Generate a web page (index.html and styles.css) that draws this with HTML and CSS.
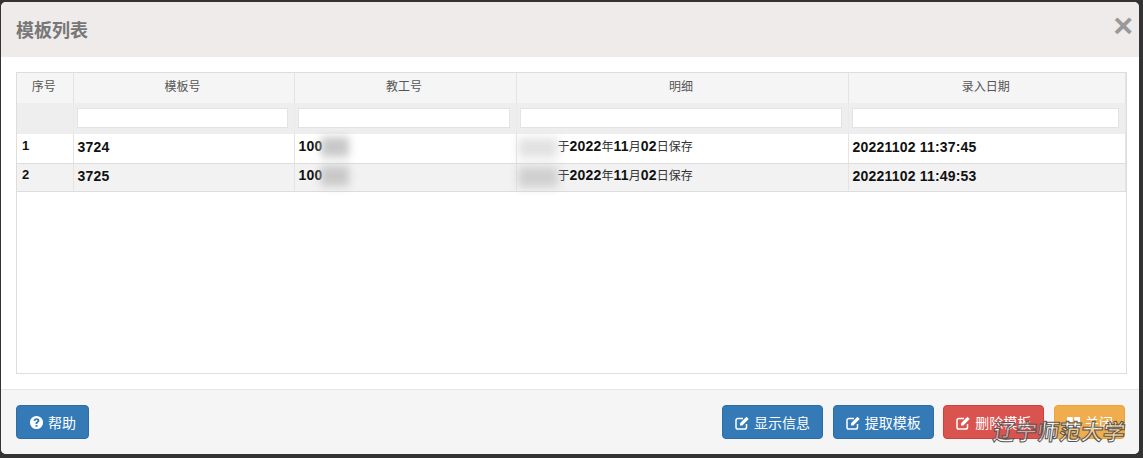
FILE: index.html
```html
<!DOCTYPE html>
<html lang="zh-CN">
<head>
<meta charset="utf-8">
<title>模板列表</title>
<link rel="stylesheet" href="styles.css">
</head>
<body>
<div class="modal">
  <header class="modal-header">
    <h4 class="modal-title">模板列表</h4>
    <span class="close">×</span>
  </header>
  <main class="modal-body">
    <div class="grid-box">
      <table class="grid">
        <colgroup>
          <col class="col-no"><col class="col-tpl"><col class="col-staff"><col class="col-detail"><col class="col-date">
        </colgroup>
        <thead>
          <tr class="head-row"><th>序号</th><th>模板号</th><th>教工号</th><th>明细</th><th>录入日期</th></tr>
          <tr class="filter-row">
            <td></td>
            <td><input class="filter" type="text"></td>
            <td><input class="filter" type="text"></td>
            <td><input class="filter" type="text"></td>
            <td><input class="filter" type="text"></td>
          </tr>
        </thead>
        <tbody>
          <tr class="row">
            <td class="num">1</td><td>3724</td>
            <td>100<span class="redact redact-id"></span></td>
            <td class="detail"><span class="redact redact-name"></span>于<b>2022</b>年<b>11</b>月<b>02</b>日保存</td>
            <td>20221102 11:37:45</td>
          </tr>
          <tr class="row alt">
            <td class="num">2</td><td>3725</td>
            <td>100<span class="redact redact-id"></span></td>
            <td class="detail"><span class="redact redact-name dark"></span>于<b>2022</b>年<b>11</b>月<b>02</b>日保存</td>
            <td>20221102 11:49:53</td>
          </tr>
        </tbody>
      </table>
    </div>
  </main>
  <footer class="modal-footer">
    <button class="btn blue" type="button">
      <svg class="ico" viewBox="0 0 16 16"><path fill="currentColor" fill-rule="evenodd" d="M8 1a7 7 0 1 1 0 14A7 7 0 0 1 8 1zM7 10.6v2h2v-2zM8 3.4c-1.8 0-3 1-3.1 2.6l1.9.3c.1-.8.5-1.2 1.2-1.2.6 0 1 .4 1 .9 0 .4-.2.7-.8 1.1C7.300 7.300 7 7.900 7 9v.6h2V9.200c0-.5.2-.8.8-1.200.8-.6 1.300-1.200 1.300-2.200 0-1.500-1.300-2.400-3.100-2.400z"/></svg>帮助
    </button>
    <div class="spacer"></div>
    <button class="btn blue" type="button"><svg class="ico" viewBox="1 0 15 15"><path fill="none" stroke="currentColor" stroke-width="1.500" d="M12.500 9v3.200a1.800 1.800 0 0 1-1.800 1.800H3.800A1.800 1.800 0 0 1 2 12.200V5.300a1.800 1.800 0 0 1 1.800-1.800H9"/><path fill="currentColor" d="M6 8.200 12.400 1.800l2.300 2.300L8.300 10.500H6z"/></svg>显示信息</button>
    <button class="btn blue" type="button"><svg class="ico" viewBox="1 0 15 15"><path fill="none" stroke="currentColor" stroke-width="1.500" d="M12.500 9v3.200a1.800 1.800 0 0 1-1.800 1.800H3.800A1.800 1.800 0 0 1 2 12.200V5.300a1.800 1.800 0 0 1 1.800-1.800H9"/><path fill="currentColor" d="M6 8.200 12.400 1.800l2.300 2.300L8.300 10.500H6z"/></svg>提取模板</button>
    <button class="btn red" type="button"><svg class="ico" viewBox="1 0 15 15"><path fill="none" stroke="currentColor" stroke-width="1.500" d="M12.500 9v3.200a1.800 1.800 0 0 1-1.800 1.800H3.800A1.800 1.800 0 0 1 2 12.200V5.300a1.800 1.800 0 0 1 1.800-1.800H9"/><path fill="currentColor" d="M6 8.200 12.400 1.800l2.300 2.300L8.300 10.500H6z"/></svg>删除模板</button>
    <button class="btn amber" type="button"><svg class="ico" viewBox="0 0 16 16"><path fill="currentColor" d="M1 2h6.200v5.400H1zM8.800 2H15v5.400H8.800zM1 8.800h6.200v5.400H1zM8.800 8.800H15v5.400H8.800z"/></svg>关闭</button>
  </footer>
  <div class="watermark">辽宁师范大学</div>
</div>
</body>
</html>
```
FILE: styles.css
```css
* { box-sizing: border-box; }
html, body { height: 100%; }
body {
  margin: 0;
  padding: 2px 4px 4px 1px;
  background: #333;
  font-family: "Liberation Sans", "Noto Sans CJK SC", sans-serif;
  overflow: hidden;
}
.modal {
  position: relative;
  height: 100%;
  display: flex;
  flex-direction: column;
  background: #fff;
  border-radius: 5px;
  overflow: hidden;
}
.modal-header {
  height: 55px;
  flex: none;
  display: flex;
  align-items: center;
  justify-content: space-between;
  padding: 0 6px 0 15px;
  background: #efebea;
}
.modal-title {
  margin: 0 0 2px;
  font-size: 18px;
  font-weight: bold;
  color: #777;
}
.close {
  font-size: 34px;
  font-weight: bold;
  line-height: 1;
  color: #999;
  margin-top: -9px;
}
.modal-body {
  flex: 1;
  padding: 15px 12px 15px 15px;
  min-height: 0;
}
.grid-box {
  height: 100%;
  border: 1px solid #ddd;
  overflow: hidden;
}
.grid {
  width: 100%;
  border-collapse: collapse;
  table-layout: fixed;
}
.col-no { width: 56px; }
.col-tpl { width: 221px; }
.col-staff { width: 222px; }
.col-detail { width: 332px; }
.head-row { height: 30px; background: #f5f5f5; }
.head-row th {
  font-size: 12px;
  font-weight: normal;
  color: #555;
  padding: 0 2px 5px 0;
  border-right: 1px solid #e4e4e4;
}
.filter-row { height: 31px; background: #eee; }
.filter-row td { padding: 0 6px 2px 3px; border-right: 1px solid #eaeaea; }
.filter {
  display: block;
  width: 100%;
  height: 20px;
  padding: 0;
  border: 1px solid #e3e3e3;
  background: #fff;
}
.row td {
  height: 29px;
  padding: 0 3px 2px 4px;
  border-right: 1px solid #e4e4e4;
  border-bottom: 1px solid #ddd;
  font-size: 14px;
  font-weight: bold;
  letter-spacing: 0.2px;
  color: #111;
  white-space: nowrap;
  overflow: visible;
}
.row.alt { background: #f2f2f2; }
.row.alt td { height: 28px; }
.row td.num { padding: 0 0 5px 5px; font-size: 13px; }
.row td.detail { padding-bottom: 1px; font-size: 12px; font-weight: normal; letter-spacing: 0; color: #333; }
.detail b { font-size: 14px; font-weight: bold; letter-spacing: 0.2px; color: #111; }
.redact {
  display: inline-block;
  height: 20px;
  vertical-align: middle;
  background: #c8c8c8;
  filter: blur(4px);
}
.redact-id { width: 28px; margin-left: -1px; }
.redact-name {
  width: 40px;
  background: #e2e2e2;
  margin-left: -3px;
  margin-right: 0;
  filter: blur(5px);
}
.redact-name.dark { background: #cfcfcf; }
.modal-footer {
  height: 65px;
  flex: none;
  display: flex;
  align-items: center;
  gap: 9.67px;
  padding: 0 14px 0 15px;
  background: #f5f5f5;
  border-top: 1px solid #e5e5e5;
}
.spacer { flex: 1; }
.btn {
  height: 34px;
  padding: 0 12px;
  display: flex;
  align-items: center;
  gap: 4px;
  border: 1px solid transparent;
  border-radius: 4px;
  font-family: inherit;
  font-size: 14px;
  color: #fff;
}
.blue { background: #337ab7; border-color: #2e6da4; }
.red { background: #d9534f; border-color: #d43f3a; }
.amber { background: #f0ad4e; border-color: #eea236; padding: 0 11px; }
.ico { width: 15px; height: 15px; flex: none; }
.watermark {
  position: absolute;
  right: 14px;
  bottom: 9px;
  font-size: 22px;
  font-weight: bold;
  line-height: 24px;
  color: rgba(255, 255, 255, 0.45);
  -webkit-text-stroke: 1px #555;
  transform: skewX(-8deg);
}
```
